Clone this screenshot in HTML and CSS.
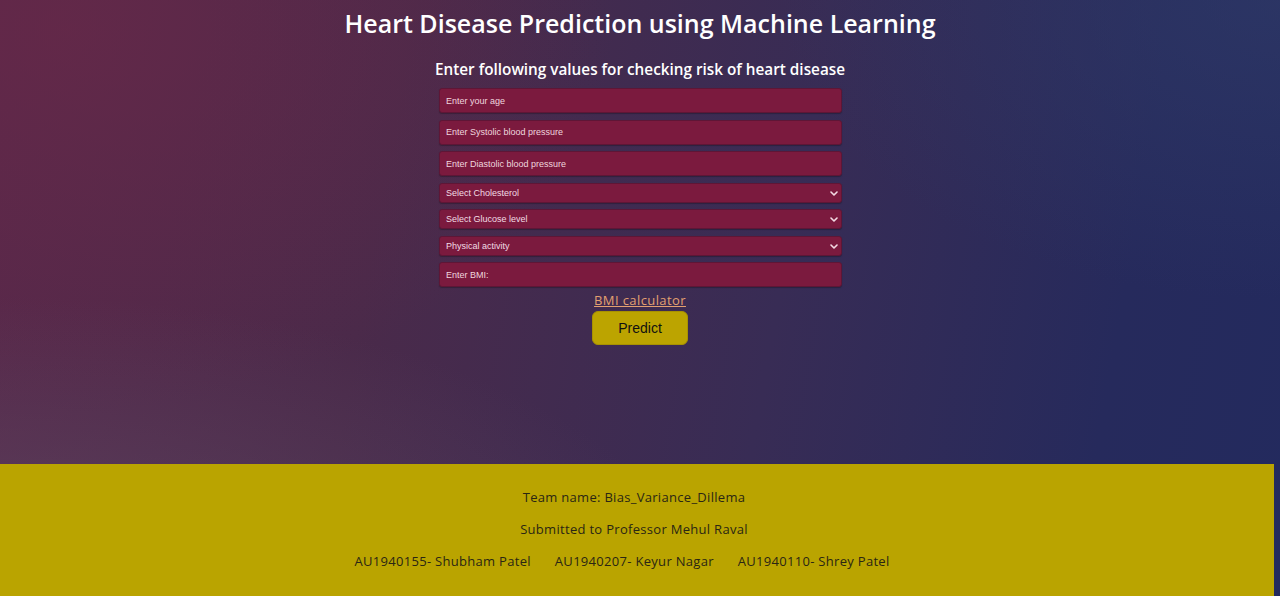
FILE: index.html
```html
<!DOCTYPE html>
<html lang="en">
<head>
<meta charset="utf-8">
<title>Heart Disease Prediction</title>
<link rel="stylesheet" href="styles.css">
</head>
<body>
<div class="page">
  <main class="main">
    <h1 class="title">Heart Disease Prediction using Machine Learning</h1>
    <h2 class="subtitle">Enter following values for checking risk of heart disease</h2>
    <form class="form">
      <input class="field" type="text" placeholder="Enter your age">
      <input class="field" type="text" placeholder="Enter Systolic blood pressure">
      <input class="field" type="text" placeholder="Enter Diastolic blood pressure">
      <div class="select-wrap">
        <select class="field select">
          <option>Select Cholesterol</option>
        </select>
        <svg class="chev" width="8" height="5" viewBox="0 0 8 5"><path d="M1 1 L4 4 L7 1" fill="none" stroke="#f3dbe4" stroke-width="1.6" stroke-linecap="round" stroke-linejoin="round"/></svg>
      </div>
      <div class="select-wrap">
        <select class="field select">
          <option>Select Glucose level</option>
        </select>
        <svg class="chev" width="8" height="5" viewBox="0 0 8 5"><path d="M1 1 L4 4 L7 1" fill="none" stroke="#f3dbe4" stroke-width="1.6" stroke-linecap="round" stroke-linejoin="round"/></svg>
      </div>
      <div class="select-wrap">
        <select class="field select">
          <option>Physical activity</option>
        </select>
        <svg class="chev" width="8" height="5" viewBox="0 0 8 5"><path d="M1 1 L4 4 L7 1" fill="none" stroke="#f3dbe4" stroke-width="1.6" stroke-linecap="round" stroke-linejoin="round"/></svg>
      </div>
      <input class="field" type="text" placeholder="Enter BMI:">
      <a class="link" href="#">BMI calculator</a>
      <button class="btn" type="button">Predict</button>
    </form>
  </main>
  <footer class="footer">
    <p class="foot-line">Team name: Bias_Variance_Dillema</p>
    <p class="foot-line">Submitted to Professor Mehul Raval</p>
    <p class="foot-line members">
      <span class="member">AU1940155- Shubham Patel</span>
      <span class="member">AU1940207- Keyur Nagar</span>
      <span class="member">AU1940110- Shrey Patel</span>
    </p>
  </footer>
</div>
</body>
</html>
```
FILE: styles.css
```css
* { box-sizing: border-box; }
html, body { margin: 0; padding: 0; }
body {
  width: 1280px;
  height: 596px;
  overflow: hidden;
  font-family: "Open Sans", "Liberation Sans", sans-serif;
  background:
    radial-gradient(ellipse 700px 300px at 0% 100%, rgba(95, 80, 105, 0.6), rgba(95, 80, 105, 0) 100%),
    radial-gradient(ellipse 550px 380px at 5% 5%, rgba(105, 40, 72, 0.65), rgba(105, 40, 72, 0) 100%),
    radial-gradient(ellipse 500px 300px at 100% 0%, rgba(48, 60, 105, 0.6), rgba(48, 60, 105, 0) 100%),
    linear-gradient(100deg, #58284a 0%, #4a2a4a 30%, #382c55 60%, #262a5c 85%, #232a5e 100%);
}
.page {
  display: flex;
  flex-direction: column;
  height: 596px;
}
.main {
  height: 464px;
  display: flex;
  flex-direction: column;
  align-items: center;
  padding-top: 7px;
}
.title {
  margin: 0;
  font-size: 25px;
  line-height: 32px;
  font-weight: 600;
  color: #ffffff;
}
.subtitle {
  margin: 20px 0 9px;
  font-size: 15.3px;
  line-height: 20px;
  font-weight: 600;
  color: #ffffff;
}
.form {
  display: flex;
  flex-direction: column;
  align-items: center;
  gap: 6.5px;
  width: 404px;
}
.field {
  width: 403px;
  height: 25px;
  margin: 0 0 0 1px;
  padding: 0 6px;
  background-color: #7b1a3e;
  border: 1px solid #5e1636;
  border-radius: 3px;
  color: #f0d8e0;
  font-family: "Liberation Sans", Arial, sans-serif;
  font-size: 9px;
  outline: none;
  box-shadow: 0 1px 1px rgba(0, 0, 0, 0.25);
}
.field::placeholder { color: #efd6df; }
.select-wrap {
  position: relative;
  width: 404px;
  height: 20px;
}
.select {
  display: block;
  height: 20px;
  padding: 0 6px;
  color: #f2dce4;
  -webkit-appearance: none;
  appearance: none;
}
.chev {
  position: absolute;
  right: 4px;
  top: 8px;
  pointer-events: none;
}
.link {
  margin-top: -3px;
  font-size: 13px;
  line-height: 18px;
  letter-spacing: 0.4px;
  color: #e3a070;
  text-decoration: underline;
}
.btn {
  margin-top: -4px;
  width: 96px;
  height: 34px;
  background: #bca400;
  border: 1px solid #a89200;
  border-radius: 6px;
  color: #111;
  font-family: "Liberation Sans", Arial, sans-serif;
  font-size: 14px;
}
.footer {
  flex: 1;
  margin-right: 6px;
  padding-right: 6px;
  background: #baa400;
  display: flex;
  flex-direction: column;
  align-items: center;
  padding-top: 24px;
  gap: 14px;
}
.foot-line {
  margin: 0;
  font-size: 13px;
  line-height: 18px;
  letter-spacing: 0.3px;
  color: #2a2614;
}
.members {
  display: flex;
}
.member {
  margin-right: 24px;
}
```
